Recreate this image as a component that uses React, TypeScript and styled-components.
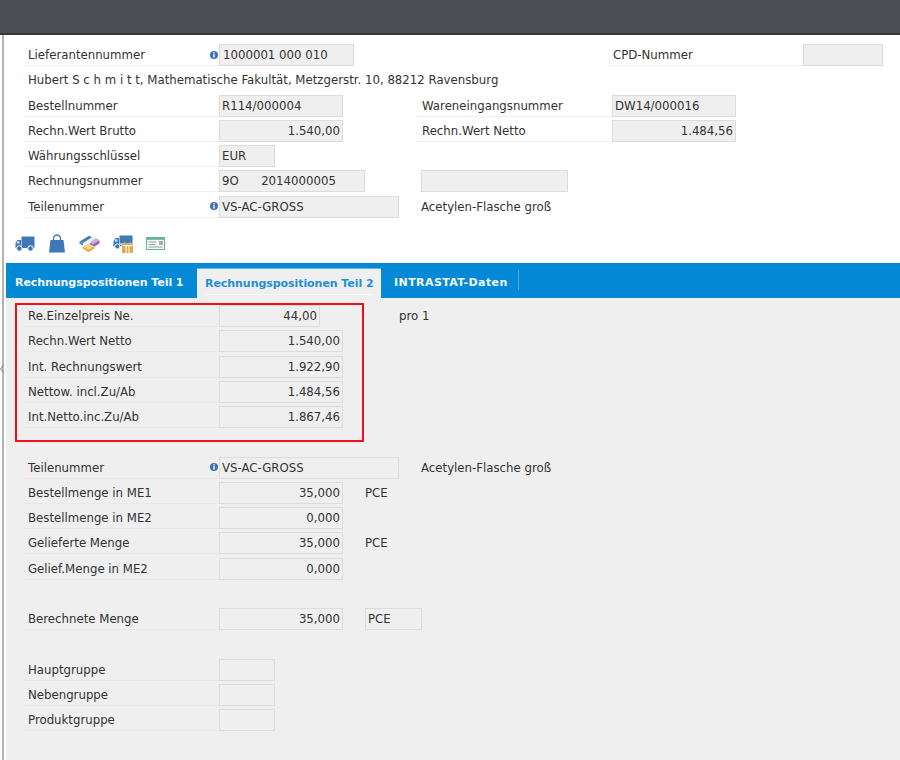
import React from "react";
import styled, { createGlobalStyle } from "styled-components";

const Global = createGlobalStyle`
  html, body { margin: 0; padding: 0; background: #fff; }
  body { width: 900px; height: 760px; overflow: hidden; font-family: "DejaVu Sans", Verdana, sans-serif; font-size: 11.75px; color: #333; }
  #root { height: 760px; }
`;

const Page = styled.div`
  position: relative;
  display: flex;
  flex-direction: column;
  width: 900px;
  height: 760px;
  overflow: hidden;
  background: #fff;
`;
const TopBar = styled.header`
  height: 33px;
  flex: none;
  background: #4b4e53;
  border-bottom: 2px solid #35373a;
`;
const Main = styled.main`
  flex: 1;
  display: flex;
  flex-direction: column;
  margin-left: 2px;
  padding-left: 2px;
  border-left: 2px solid #b4b4b4;
  min-height: 0;
`;
const TopSection = styled.section`
  height: 228px;
  flex: none;
  box-sizing: border-box;
  padding: 9px 0 0 17px;
`;
const Row = styled.div`
  display: flex;
  align-items: flex-start;
  height: 25.25px;
`;
const Label = styled.div<{ $gap?: number; $width?: number; $line?: string }>`
  box-sizing: border-box;
  position: relative;
  width: ${(p) => p.$width ?? 196}px;
  margin-left: ${(p) => p.$gap ?? 0}px;
  height: 22px;
  line-height: 23px;
  padding-left: 5px;
  border-bottom: 1.5px solid ${(p) => p.$line ?? "#efefef"};
  white-space: nowrap;
`;
const Field = styled.div<{ $width: number; $right?: boolean; $gap?: number; $inset?: number }>`
  box-sizing: border-box;
  flex: none;
  width: ${(p) => p.$width}px;
  margin-left: ${(p) => p.$gap ?? 0}px;
  height: 22px;
  line-height: 21px;
  padding: 0 2px 0 ${(p) => p.$inset ?? 2}px;
  background: #efefef;
  border: 1.5px solid #dcdcdc;
  text-align: ${(p) => (p.$right ? "right" : "left")};
  white-space: pre;
`;
const Plain = styled.div<{ $gap?: number; $inset?: number }>`
  margin-left: ${(p) => p.$gap ?? 0}px;
  padding-left: ${(p) => p.$inset ?? 0}px;
  line-height: 23px;
  white-space: nowrap;
`;
const InfoMark = styled.svg`
  position: absolute;
  right: 1.5px;
  top: 6.5px;
  width: 8px;
  height: 8px;
`;
const IconBar = styled.div`
  display: flex;
  gap: 13px;
  margin: 14px 0 0 -8px;
  height: 18px;
  align-items: center;
`;
const TabBar = styled.nav`
  flex: none;
  display: flex;
  align-items: flex-end;
  height: 35px;
  background: #0489d6;
  font-weight: 700;
  font-size: 11px;
  color: #f2f8fc;
`;
const Tab = styled.div<{ $active?: boolean; $pl: number; $pr: number; $spacing?: number }>`
  position: relative;
  height: 30px;
  line-height: 30px;
  padding: 0 ${(p) => p.$pr}px 0 ${(p) => p.$pl}px;
  white-space: nowrap;
  letter-spacing: ${(p) => p.$spacing ?? 0}px;
  background: ${(p) => (p.$active ? "#efefef" : "transparent")};
  color: ${(p) => (p.$active ? "#1f8fd6" : "#f2f8fc")};
  border-top: ${(p) => (p.$active ? "1px solid #5fb3e5" : "0")};
  box-sizing: border-box;
  &::after {
    content: "";
    display: ${(p) => (p.$active ? "block" : "none")};
    position: absolute;
    left: 8px;
    right: 8px;
    bottom: 3px;
    height: 1px;
    background: #f8f8f8;
  }
`;
const TabDivider = styled.div`
  width: 1px;
  height: 20px;
  margin-bottom: 8px;
  background: #4aa8e0;
`;
const Lower = styled.section`
  position: relative;
  flex: 1;
  background: #efefef;
  padding: 7px 0 0 17px;
`;
const Blank = styled.div`
  height: 25.25px;
`;
const RedBox = styled.div`
  position: absolute;
  left: 9px;
  top: 4.5px;
  width: 349px;
  height: 139px;
  box-sizing: border-box;
  border: 2px solid #f20f1a;
  pointer-events: none;
`;
const Handle = styled.svg`
  position: absolute;
  left: 0;
  top: 365px;
  width: 4px;
  height: 8px;
`;

const Info = () => (
  <InfoMark viewBox="0 0 8 8">
    <circle cx="4" cy="4" r="4" fill="#3a74b4" />
    <rect x="3.3" y="1.2" width="1.4" height="1.3" fill="#fff" />
    <rect x="3.3" y="3.2" width="1.4" height="3.4" fill="#fff" />
  </InfoMark>
);

const Truck = () => (
  <svg width="20" height="16" viewBox="0 0 20 16">
    <path d="M6.500 .5h13v11.500H6.500z" fill="#3f78b4" />
    <path d="M.5 12V7L2.500 4h3.500v8z" fill="#3f78b4" />
    <rect x="1.800" y="5.300" width="2.700" height="2.200" fill="#cfe0f0" />
    <circle cx="4.300" cy="12.500" r="2.800" fill="#3f78b4" stroke="#fff" strokeWidth="1" />
    <circle cx="15.500" cy="12.500" r="2.800" fill="#3f78b4" stroke="#fff" strokeWidth="1" />
  </svg>
);
const Bag = () => (
  <svg width="18" height="19" viewBox="0 0 18 19">
    <path d="M2.500 6h13l1.500 12.500H1z" fill="#3f78b4" />
    <path d="M5.500 8V4.500a3.500 3.500 0 0 1 7 0V8" fill="none" stroke="#3f78b4" strokeWidth="1.300" />
  </svg>
);
const Boxes = () => (
  <svg width="21" height="18" viewBox="0 0 21 18">
    <path d="M.5 6.500L10 .8l3 1.700-9 5.700z" fill="#4a80ba" />
    <path d="M.5 6.500v2l3.500 2v-2z" fill="#3f78b4" />
    <path d="M4 8.200l9-5.700 3 1.500-9 5.500z" fill="#eef1f5" />
    <path d="M10 9l8-5 2.500 1.500v3L13 13z" fill="#9c64b4" />
    <path d="M11 7l6-4 3.500 2.500-7 4z" fill="#c9aed8" />
    <path d="M3.500 11.500l6-3 6 3-6 3z" fill="#f5d48e" />
    <path d="M3.500 11.500v2l6 3.700v-2.700zM15.500 11.500v2l-6 3.700v-2.700z" fill="#e6ad4c" />
  </svg>
);
const TruckBox = () => (
  <svg width="20" height="18" viewBox="0 0 20 18">
    <path d="M6.500 .5h13v8H6.500z" fill="#3f78b4" />
    <path d="M.5 11V6L2.500 3h3.500v8z" fill="#3f78b4" />
    <rect x="1.800" y="4.300" width="2.700" height="2.200" fill="#cfe0f0" />
    <path d="M.5 9.500h8v2h-8z" fill="#3f78b4" />
    <circle cx="4.300" cy="11.500" r="2.600" fill="#3f78b4" stroke="#fff" strokeWidth="1" />
    <rect x="9" y="8.500" width="11" height="9.500" fill="#dba94f" />
    <path d="M13 8.500l-2-1.500M16 8.500l2-1.500" stroke="#dba94f" strokeWidth="1" />
    <path d="M13 11v7M16 11v7M9.500 10.500h10" stroke="#fff" strokeWidth="1" />
  </svg>
);
const Card = () => (
  <svg width="19" height="13" viewBox="0 0 19 13">
    <rect x=".5" y=".5" width="18" height="12" fill="#f4f7f4" stroke="#62b592" />
    <rect x="1" y="1" width="17" height="1.800" fill="#62b592" />
    <rect x="13" y="4" width="4" height="4" fill="#a6adb0" />
    <path d="M2.500 5h8M2.500 7.500h7M2.500 10h14" stroke="#9aa0a4" strokeWidth="1" />
  </svg>
);

const LowerRow = ({ label, value, width = 124, after }: { label: string; value?: string; width?: number; after?: React.ReactNode }) => (
  <Row>
    <Label $line="#e8e8e8">{label}</Label>
    <Field $width={width} $right>{value}</Field>
    {after}
  </Row>
);

export default function App() {
  return (
    <Page>
      <Global />
      <TopBar />
      <Main>
        <TopSection>
          <Row>
            <Label>Lieferantennummer<Info /></Label>
            <Field $width={135} $inset={3}>1000001 000 010</Field>
            <Label $gap={254} $width={195}>CPD-Nummer</Label>
            <Field $width={80} />
          </Row>
          <Row><Plain $inset={5}>Hubert S c h m i t t, Mathematische Fakultät, Metzgerstr. 10, 88212 Ravensburg</Plain></Row>
          <Row>
            <Label>Bestellnummer</Label>
            <Field $width={124}>R114/000004</Field>
            <Label $gap={74} $width={195}>Wareneingangsnummer</Label>
            <Field $width={124}>DW14/000016</Field>
          </Row>
          <Row>
            <Label>Rechn.Wert Brutto</Label>
            <Field $width={124} $right>1.540,00</Field>
            <Label $gap={74} $width={195}>Rechn.Wert Netto</Label>
            <Field $width={124} $right>1.484,56</Field>
          </Row>
          <Row>
            <Label>Währungsschlüssel</Label>
            <Field $width={56}>EUR</Field>
          </Row>
          <Row>
            <Label>Rechnungsnummer</Label>
            <Field $width={146}>{"9O      2014000005"}</Field>
            <Field $width={147} $gap={56} />
          </Row>
          <Row>
            <Label>Teilenummer<Info /></Label>
            <Field $width={180}>VS-AC-GROSS</Field>
            <Plain $gap={22}>Acetylen-Flasche groß</Plain>
          </Row>
          <IconBar>
            <Truck /><Bag /><Boxes /><TruckBox /><Card />
          </IconBar>
        </TopSection>
        <TabBar>
          <Tab $pl={9} $pr={13.6} $spacing={-0.06}>Rechnungspositionen Teil 1</Tab>
          <Tab $active $pl={8} $pr={7.6} $spacing={-0.06}>Rechnungspositionen Teil 2</Tab>
          <Tab $pl={13} $pr={10.5} $spacing={0.4}>INTRASTAT-Daten</Tab>
          <TabDivider />
        </TabBar>
        <Lower>
          <LowerRow label="Re.Einzelpreis Ne." value="44,00" width={101} after={<Plain $gap={79}>pro 1</Plain>} />
          <LowerRow label="Rechn.Wert Netto" value="1.540,00" />
          <LowerRow label="Int. Rechnungswert" value="1.922,90" />
          <LowerRow label="Nettow. incl.Zu/Ab" value="1.484,56" />
          <LowerRow label="Int.Netto.inc.Zu/Ab" value="1.867,46" />
          <Blank />
          <Row>
            <Label $line="#e8e8e8">Teilenummer<Info /></Label>
            <Field $width={180}>VS-AC-GROSS</Field>
            <Plain $gap={22}>Acetylen-Flasche groß</Plain>
          </Row>
          <LowerRow label="Bestellmenge in ME1" value="35,000" after={<Plain $gap={22}>PCE</Plain>} />
          <LowerRow label="Bestellmenge in ME2" value="0,000" />
          <LowerRow label="Gelieferte Menge" value="35,000" after={<Plain $gap={22}>PCE</Plain>} />
          <LowerRow label="Gelief.Menge in ME2" value="0,000" />
          <Blank />
          <LowerRow label="Berechnete Menge" value="35,000" after={<Field $width={57} $gap={22}>PCE</Field>} />
          <Blank />
          <LowerRow label="Hauptgruppe" width={56} />
          <LowerRow label="Nebengruppe" width={56} />
          <LowerRow label="Produktgruppe" width={56} />
          <RedBox />
        </Lower>
      </Main>
      <Handle viewBox="0 0 4 8">
        <path d="M3.500 .5L.5 4l3 3.500" fill="none" stroke="#777" strokeWidth="1" />
      </Handle>
    </Page>
  );
}
